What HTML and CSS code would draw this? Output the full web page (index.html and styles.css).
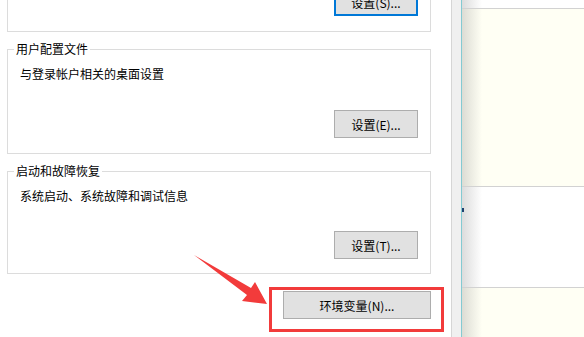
FILE: index.html
```html
<!DOCTYPE html>
<html lang="zh-CN">
<head>
    <meta charset="utf-8">
    <link rel="stylesheet" href="styles.css">
    <title>系统属性 - 高级</title>
</head>
<body>
    <div class="page">
        <!--DIALOG: ADVANCED TAB-->
        <div class="dialog">
            <fieldset class="group group-first">
                <legend>性能</legend>
                <p class="group-text">视觉效果，处理器计划，内存使用，以及虚拟内存</p>
                <div class="button-row">
                    <button class="button button-focus">设置(S)...</button>
                </div>
            </fieldset>

            <fieldset class="group">
                <legend>用户配置文件</legend>
                <p class="group-text">与登录帐户相关的桌面设置</p>
                <div class="button-row">
                    <button class="button">设置(E)...</button>
                </div>
            </fieldset>

            <fieldset class="group group-last">
                <legend>启动和故障恢复</legend>
                <p class="group-text">系统启动、系统故障和调试信息</p>
                <div class="button-row">
                    <button class="button">设置(T)...</button>
                </div>
            </fieldset>

            <div class="button-row env-row">
                <button class="button env-button">环境变量(N)...</button>
            </div>
        </div>

        <div class="gutter"></div>

        <!--WINDOW BEHIND THE DIALOG-->
        <div class="pane">
            <div class="pane-head"></div>
            <div class="pane-note pane-note-top"></div>
            <div class="pane-body"><span class="pane-mark"></span></div>
            <div class="pane-note pane-note-bottom"></div>
        </div>

        <!--ANNOTATION: RED ARROW AND BOX-->
        <svg class="annotation" width="584" height="337" viewBox="0 0 584 337">
            <polygon points="194,255 251,288 255,282 267,304 242,301 247,295" fill="#f23b3b"/>
            <rect x="270.5" y="288.5" width="172" height="42" fill="none" stroke="#f23b3b" stroke-width="3"/>
        </svg>
    </div>
</body>
</html>
```

FILE: styles.css
```css
body{
    margin: 0;
    font-family: "Noto Sans CJK SC", "Noto Sans", sans-serif;
    font-size: 12px;
    color: #000;
}
.page{
    position: relative;
    display: flex;
    width: 584px;
    height: 337px;
    overflow: hidden;
    background-color: #fff;
}
.dialog{
    width: 451px;
    flex-shrink: 0;
    padding: 0 20px 0 7px;
    box-sizing: border-box;
    background-color: #fff;
}
.group{
    margin: 10px 0 0 0;
    padding: 0 12px 15px 6px;
    border: 1px solid #dcdcdc;
    min-width: 0;
}
.group-first{
    margin-top: -100px;
}
.group-first .button-row{
    margin-top: 49px;
}
.group-last{
    padding-bottom: 14px;
}
.group-last .button-row{
    margin-top: 28px;
}
.group legend{
    padding: 0 2px;
    line-height: 14px;
}
.group-text{
    margin: 11px 0 0 6px;
    line-height: 14px;
}
.button-row{
    display: flex;
    justify-content: flex-end;
    margin-top: 29px;
}
.button{
    width: 84px;
    height: 28px;
    padding: 0;
    font-family: inherit;
    font-size: 12px;
    color: #000;
    background-color: #e1e1e1;
    border: 1px solid #adadad;
    border-radius: 0;
}
.button-focus{
    border: 2px solid #0078d7;
}
.env-row{
    margin-top: 17px;
}
.env-button{
    width: 148px;
}
.gutter{
    width: 10px;
    flex-shrink: 0;
    border-left: 1px solid #d6d6d6;
    background-color: #f0f0f0;
    box-sizing: border-box;
}
.pane{
    flex: 1;
    display: flex;
    flex-direction: column;
    border-left: 1px solid #84cad2;
}
.pane-head,
.pane-body{
    background: linear-gradient(to right, #dcdcdc, rgba(255,255,255,0) 20px), #fff;
    border-bottom: 1px solid #d2d2d2;
}
.pane-head{
    height: 8px;
}
.pane-note{
    background: linear-gradient(to right, #dcdcd4, rgba(255,255,245,0) 20px), #fffff4;
}
.pane-note-top{
    height: 177px;
    border-bottom: 1px solid #d2d2d2;
}
.pane-body{
    height: 100px;
}
.pane-body .pane-mark{
    display: block;
    width: 2px;
    height: 4px;
    margin-top: 21px;
    background-color: #1f3f6f;
}
.pane-note-bottom{
    flex: 1;
}
.annotation{
    position: absolute;
    left: 0;
    top: 0;
    pointer-events: none;
}
```
